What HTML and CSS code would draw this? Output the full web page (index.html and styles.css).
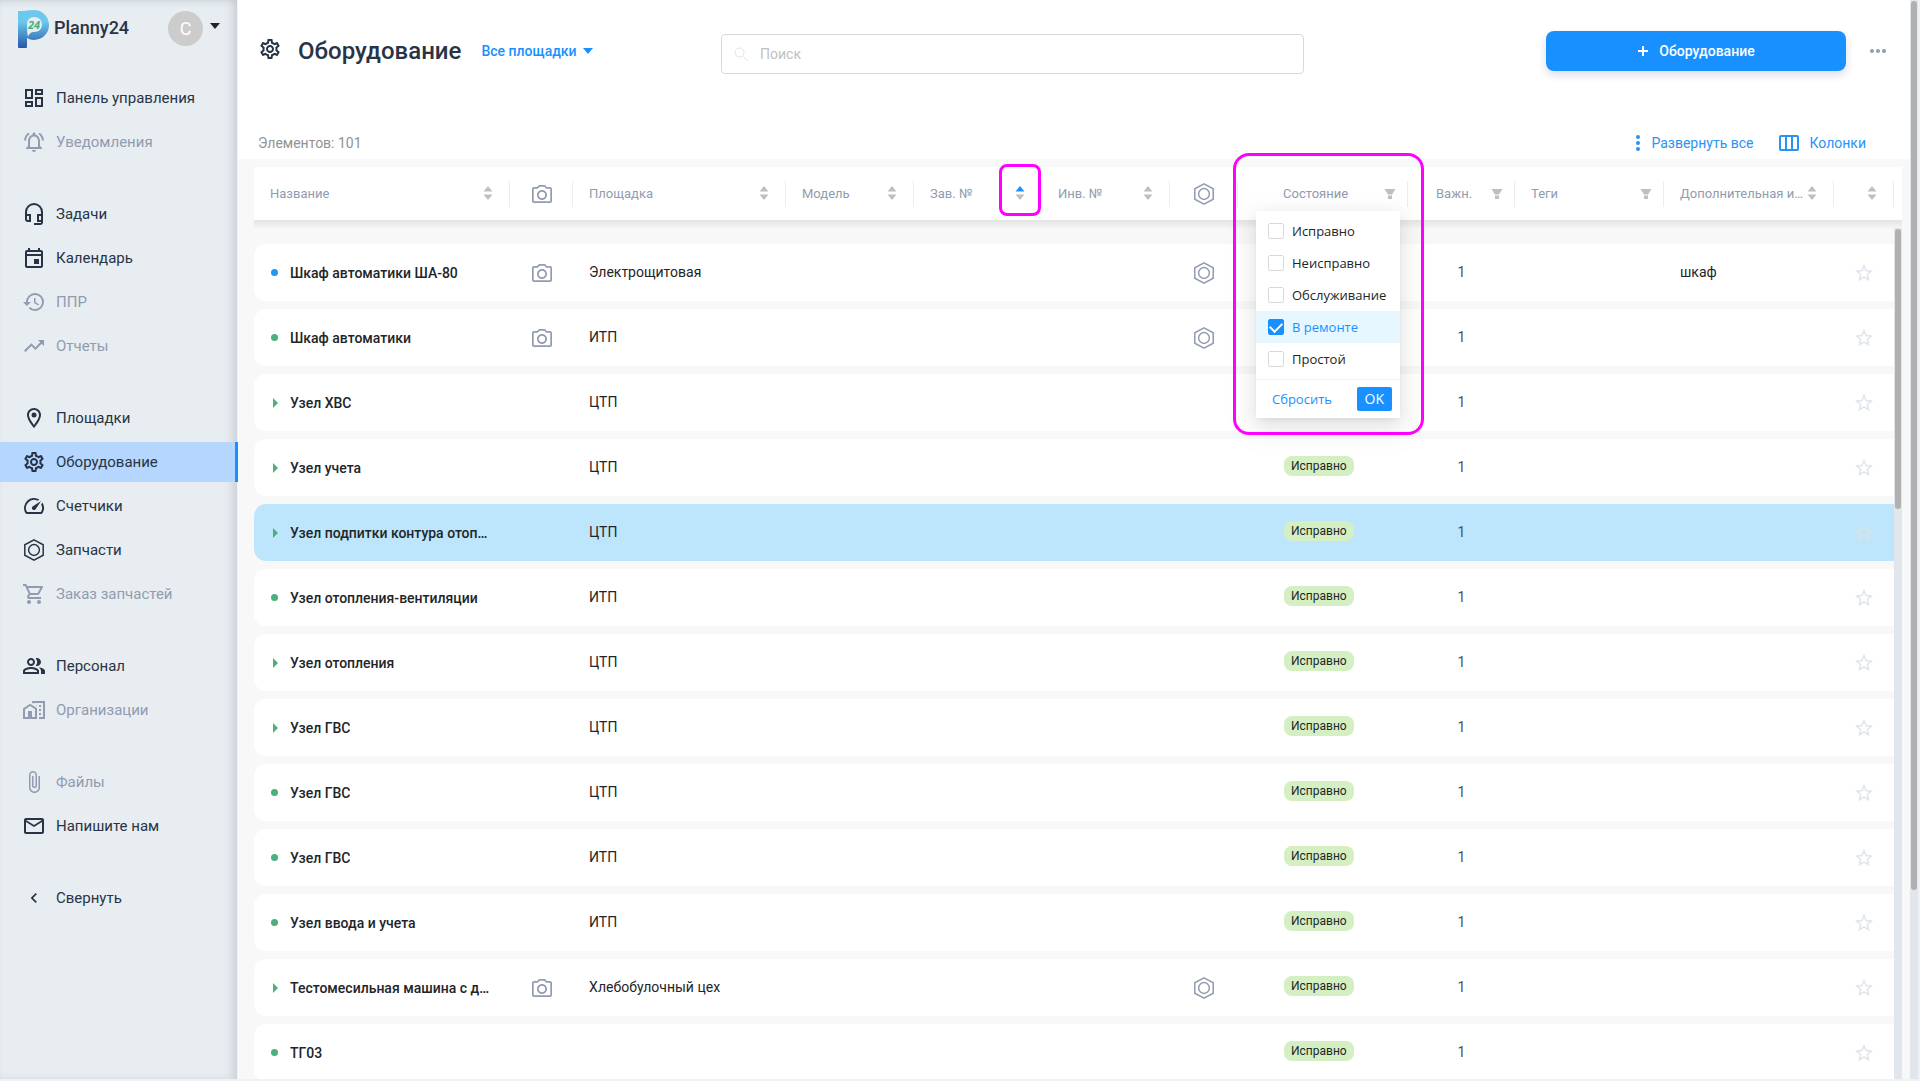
FILE: index.html
```html
<!DOCTYPE html>
<html lang="ru">
<head>
<meta charset="utf-8">
<title>Planny24 — Оборудование</title>
<link rel="stylesheet" href="styles.css">
</head>
<body>
<svg class="sprite" aria-hidden="true">
  <symbol id="i-dashboard" viewBox="0 0 24 24"><path d="M19 5v2h-4V5h4M9 5v6H5V5h4m10 8v6h-4v-6h4M9 17v2H5v-2h4M21 3h-8v6h8V3zM11 3H3v10h8V3zm10 8h-8v10h8V11zm-10 4H3v6h8v-6z"/></symbol>
  <symbol id="i-bell" viewBox="0 0 24 24"><path d="M12 22c1.1 0 2-.9 2-2h-4c0 1.100.9 2 2 2zm6-6v-5c0-3.070-1.630-5.640-4.500-6.320V4c0-.83-.67-1.500-1.500-1.500s-1.500.67-1.500 1.500v.68C7.640 5.360 6 7.920 6 11v5l-2 2v1h16v-1l-2-2zm-2 1H8v-6c0-2.480 1.510-4.500 4-4.500s4 2.020 4 4.500v6zM7.580 4.080L6.150 2.650C3.750 4.480 2.170 7.300 2.030 10.500h2c.15-2.650 1.510-4.970 3.550-6.420zm12.390 6.420h2c-.15-3.200-1.730-6.020-4.120-7.850l-1.420 1.430c2.020 1.450 3.390 3.770 3.540 6.420z"/></symbol>
  <symbol id="i-headset" viewBox="0 0 24 24"><path d="M12 1a9 9 0 0 0-9 9v7a3 3 0 0 0 3 3h3v-8H5v-2a7 7 0 0 1 14 0v2h-4v8h4v1h-7v2h6a3 3 0 0 0 3-3V10a9 9 0 0 0-9-9zM7 14v4H6a1 1 0 0 1-1-1v-3h2zm10 4v-4h2v4h-2z"/></symbol>
  <symbol id="i-event" viewBox="0 0 24 24"><path d="M19 4h-1V2h-2v2H8V2H6v2H5c-1.110 0-1.990.9-1.990 2L3 20c0 1.100.89 2 2 2h14c1.100 0 2-.9 2-2V6c0-1.100-.9-2-2-2zm0 16H5V10h14v10zm0-12H5V6h14v2zm-7 5h5v5h-5z"/></symbol>
  <symbol id="i-history" viewBox="0 0 24 24"><path d="M13 3a9 9 0 0 0-9 9H1l3.890 3.890.07.14L9 12H6c0-3.870 3.130-7 7-7s7 3.130 7 7-3.130 7-7 7c-1.930 0-3.680-.79-4.940-2.060l-1.420 1.420A8.950 8.950 0 0 0 13 21a9 9 0 0 0 0-18zm-1 5v5l4.280 2.540.72-1.210-3.500-2.080V8H12z"/></symbol>
  <symbol id="i-trend" viewBox="0 0 24 24"><path d="M16 6l2.290 2.290-4.880 4.880-4-4L2 16.590 3.410 18l6-6 4 4 6.300-6.290L22 12V6z"/></symbol>
  <symbol id="i-place" viewBox="0 0 24 24"><path d="M12 2C8.130 2 5 5.130 5 9c0 5.250 7 13 7 13s7-7.750 7-13c0-3.870-3.130-7-7-7zM7 9c0-2.760 2.240-5 5-5s5 2.240 5 5c0 2.880-2.880 7.190-5 9.880C9.920 16.210 7 11.850 7 9z"/><circle cx="12" cy="9" r="2.500"/></symbol>
  <symbol id="i-gear" viewBox="0 0 24 24"><path d="M19.430 12.980c.04-.32.07-.64.07-.98 0-.34-.03-.66-.07-.98l2.110-1.650c.19-.15.24-.42.12-.64l-2-3.460c-.09-.16-.26-.25-.44-.25-.06 0-.12.010-.17.030l-2.490 1c-.52-.4-1.080-.73-1.690-.98l-.38-2.650C14.460 2.180 14.250 2 14 2h-4c-.25 0-.46.18-.49.42l-.38 2.650c-.61.25-1.170.59-1.690.98l-2.490-1c-.06-.02-.12-.03-.18-.03-.17 0-.34.09-.43.25l-2 3.460c-.13.22-.07.49.12.64l2.110 1.650c-.04.32-.07.65-.07.98 0 .33.03.66.07.98l-2.110 1.650c-.19.15-.24.42-.12.64l2 3.460c.09.16.26.25.44.25.06 0 .12-.01.17-.03l2.490-1c.52.4 1.080.73 1.690.98l.38 2.650c.03.24.24.42.49.42h4c.25 0 .46-.18.49-.42l.38-2.650c.61-.25 1.170-.59 1.690-.98l2.490 1c.06.02.12.03.18.03.17 0 .34-.09.43-.25l2-3.460c.12-.22.07-.49-.12-.64l-2.110-1.650zm-1.980-1.710c.04.31.05.52.05.73 0 .21-.02.43-.05.73l-.14 1.130.89.7 1.080.84-.7 1.210-1.270-.51-1.040-.42-.9.68c-.43.32-.84.56-1.250.73l-1.060.43-.16 1.130-.2 1.350h-1.400l-.19-1.350-.16-1.130-1.060-.43c-.43-.18-.83-.41-1.230-.71l-.91-.7-1.060.43-1.270.51-.7-1.210 1.080-.84.89-.7-.14-1.130c-.03-.31-.05-.54-.05-.74s.02-.43.05-.73l.14-1.130-.89-.7-1.080-.84.7-1.210 1.270.51 1.040.42.9-.68c.43-.32.84-.56 1.250-.73l1.060-.43.16-1.130.2-1.350h1.390l.19 1.350.16 1.130 1.060.43c.43.18.83.41 1.230.71l.91.7 1.060-.43 1.270-.51.7 1.210-1.070.85-.89.7.14 1.130zM12 8c-2.210 0-4 1.790-4 4s1.790 4 4 4 4-1.790 4-4-1.790-4-4-4zm0 6c-1.100 0-2-.9-2-2s.9-2 2-2 2 .9 2 2-.9 2-2 2z"/></symbol>
  <symbol id="i-speed" viewBox="0 0 24 24"><path d="M20.380 8.570l-1.230 1.850a8 8 0 0 1-.22 7.580H5.070A8 8 0 0 1 15.580 6.850l1.850-1.230A10 10 0 0 0 3.350 19a2 2 0 0 0 1.720 1h13.850a2 2 0 0 0 1.740-1 10 10 0 0 0-.27-10.440zm-9.790 6.840a2 2 0 0 0 2.830 0l5.660-8.490-8.490 5.660a2 2 0 0 0 0 2.830z"/></symbol>
  <symbol id="i-nut" viewBox="0 0 24 24"><g fill="none" stroke="currentColor" stroke-width="1.500"><path d="M12 1.800l9.200 5v10.400l-9.200 5-9.200-5V6.800z"/><circle cx="12" cy="12" r="5.400"/></g></symbol>
  <symbol id="i-cart" viewBox="0 0 24 24"><path d="M15.550 13c.75 0 1.410-.41 1.750-1.030l3.580-6.490A.996.996 0 0 0 20.010 4H5.210l-.94-2H1v2h2l3.600 7.590-1.350 2.440C4.520 15.370 5.480 17 7 17h12v-2H7l1.100-2h7.450zM6.160 6h12.150l-2.760 5H8.530L6.160 6zM7 18c-1.100 0-1.990.9-1.990 2S5.900 22 7 22s2-.9 2-2-.9-2-2-2zm10 0c-1.100 0-1.990.9-1.990 2s.89 2 1.990 2 2-.9 2-2-.9-2-2-2z"/></symbol>
  <symbol id="i-people" viewBox="0 0 24 24"><path d="M16.670 13.130C18.040 14.060 19 15.320 19 17v3h4v-3c0-2.180-3.570-3.470-6.330-3.870zM15 12c2.210 0 4-1.790 4-4s-1.790-4-4-4c-.47 0-.91.1-1.330.24a5.980 5.980 0 0 1 0 7.520c.42.14.86.24 1.330.24zM9 12c2.210 0 4-1.790 4-4s-1.790-4-4-4-4 1.790-4 4 1.790 4 4 4zm0-6c1.100 0 2 .9 2 2s-.9 2-2 2-2-.9-2-2 .9-2 2-2zm0 7c-2.670 0-8 1.340-8 4v3h16v-3c0-2.660-5.330-4-8-4zm6 5H3v-.99C3.200 16.290 6.300 15 9 15s5.800 1.290 6 2v1z"/></symbol>
  <symbol id="i-homework" viewBox="0 0 24 24"><path d="M17 15h2v2h-2zM17 11h2v2h-2zM17 7h2v2h-2zM13.740 7l1.260.84V7z"/><path d="M10 3v1.510l2 1.330V5h9v14h-4v2h6V3z"/><path d="M8.170 5.700L15 10.250V21H1V10.480L8.170 5.700zM10 19h3v-7.840L8.170 8.090 3 11.380V19h3v-6h4v6z"/></symbol>
  <symbol id="i-clip" viewBox="0 0 24 24"><path d="M16.500 6v11.500c0 2.210-1.790 4-4 4s-4-1.790-4-4V5a2.500 2.500 0 0 1 5 0v10.500c0 .55-.45 1-1 1s-1-.45-1-1V6H10v9.500a2.500 2.500 0 0 0 5 0V5c0-2.210-1.790-4-4-4S7 2.790 7 5v12.500c0 3.040 2.460 5.500 5.500 5.500s5.500-2.460 5.500-5.500V6h-1.500z"/></symbol>
  <symbol id="i-mail" viewBox="0 0 24 24"><path d="M22 6c0-1.100-.9-2-2-2H4c-1.100 0-2 .9-2 2v12c0 1.100.9 2 2 2h16c1.100 0 2-.9 2-2V6zm-2 0l-8 5-8-5h16zm0 12H4V8l8 5 8-5v10z"/></symbol>
  <symbol id="i-left" viewBox="0 0 24 24"><path d="M15.410 7.410L14 6l-6 6 6 6 1.410-1.410L10.830 12z"/></symbol>
  <symbol id="i-camera" viewBox="0 0 24 24"><path d="M20 5h-3.170L15 3H9L7.170 5H4c-1.100 0-2 .9-2 2v12c0 1.100.9 2 2 2h16c1.100 0 2-.9 2-2V7c0-1.100-.9-2-2-2zm.300 14.300H3.700V6.700h4.050L9.700 4.700h4.600l1.950 2h4.050v12.600zM12 8c-2.760 0-5 2.240-5 5s2.240 5 5 5 5-2.240 5-5-2.240-5-5-5zm0 8.300c-1.800 0-3.300-1.500-3.300-3.300s1.500-3.300 3.300-3.300 3.300 1.500 3.300 3.300-1.500 3.300-3.300 3.300z"/></symbol>
  <symbol id="i-star" viewBox="0 0 24 24"><path d="M22 9.240l-7.190-.62L12 2 9.190 8.630 2 9.240l5.460 4.730L5.820 21 12 17.270 18.180 21l-1.630-7.030L22 9.240zM12 15.400l-3.760 2.270 1-4.280-3.320-2.880 4.380-.38L12 6.100l1.710 4.040 4.380.38-3.320 2.880 1 4.280L12 15.400z"/></symbol>
  <symbol id="i-search" viewBox="0 0 16 16"><g fill="none" stroke="currentColor" stroke-width="1"><circle cx="6.500" cy="6.500" r="4.500"/><path d="M9.800 10l5 5"/></g></symbol>
  <symbol id="i-sort" viewBox="0 0 10 14"><path d="M5 0l4.500 5.500h-9z"/><path d="M5 14L.5 8.500h9z"/></symbol>
  <symbol id="i-sort-up" viewBox="0 0 10 14"><path fill="#1890ff" d="M5 0l4.500 5.500h-9z"/><path d="M5 14L.5 8.500h9z"/></symbol>
  <symbol id="i-filter" viewBox="0 0 12 12"><path d="M.5 1h11L8 6.500H4zM4 7.500h4V11H4z"/></symbol>
  <symbol id="i-cols" viewBox="0 0 20 16"><g fill="none" stroke="currentColor" stroke-width="2"><rect x="1" y="1" width="18" height="14" rx="1"/><path d="M7 1v14M13 1v14"/></g></symbol>
  <symbol id="i-down" viewBox="0 0 10 6"><path d="M0 0h10L5 6z"/></symbol>
  <symbol id="i-right" viewBox="0 0 6 10"><path d="M0 0l5 5-5 5z"/></symbol>
  <symbol id="i-dots" viewBox="0 0 16 4"><circle cx="2" cy="2" r="2"/><circle cx="8" cy="2" r="2"/><circle cx="14" cy="2" r="2"/></symbol>
  <symbol id="i-vdots" viewBox="0 0 4 16"><circle cx="2" cy="2" r="2"/><circle cx="2" cy="8" r="2"/><circle cx="2" cy="14" r="2"/></symbol>
  <symbol id="i-plus" viewBox="0 0 12 12"><path d="M5 1h2v4h4v2H7v4H5V7H1V5h4z"/></symbol>
</svg>

<div class="app">
  <aside class="sidebar">
    <div class="brand">
      <svg class="logo" viewBox="0 0 31 38" role="img" aria-label="Planny24">
        <defs><linearGradient id="lg" x1="0" y1="0" x2="0" y2="1"><stop offset=".3" stop-color="#6cc9ee"/><stop offset="1" stop-color="#2a56a5"/></linearGradient></defs>
        <path fill="url(#lg)" d="M0 1h6q5-1 10-1a15 15 0 0 1 0 30q-4 0-7-2V37q0 1-1 1H1q-1 0-1-1z"/>
        <path fill="#e7edf1" d="M16 7c5 0 8 3 8 7.500S21 22 16 22c-3 0-4 1-6 4.500C9 24 9 19 9 14.500 9 10 12 7 16 7z"/>
        <text class="logo-text" x="10" y="19">24</text>
      </svg>
      <span class="brand-name">Planny24</span>
      <button class="user" type="button" aria-label="Профиль"><span class="avatar">C</span><svg class="caret"><use href="#i-down"/></svg></button>
    </div>
    <nav class="menu">
      <ul>
        <li><a href="#"><svg><use href="#i-dashboard"/></svg>Панель управления</a></li>
        <li><a class="muted" href="#"><svg><use href="#i-bell"/></svg>Уведомления</a></li>
      </ul>
      <ul>
        <li><a href="#"><svg><use href="#i-headset"/></svg>Задачи</a></li>
        <li><a href="#"><svg><use href="#i-event"/></svg>Календарь</a></li>
        <li><a class="muted" href="#"><svg><use href="#i-history"/></svg>ППР</a></li>
        <li><a class="muted" href="#"><svg><use href="#i-trend"/></svg>Отчеты</a></li>
      </ul>
      <ul>
        <li><a href="#"><svg><use href="#i-place"/></svg>Площадки</a></li>
        <li><a class="active" href="#"><svg><use href="#i-gear"/></svg>Оборудование</a></li>
        <li><a href="#"><svg><use href="#i-speed"/></svg>Счетчики</a></li>
        <li><a href="#"><svg><use href="#i-nut"/></svg>Запчасти</a></li>
        <li><a class="muted" href="#"><svg><use href="#i-cart"/></svg>Заказ запчастей</a></li>
      </ul>
      <ul>
        <li><a href="#"><svg><use href="#i-people"/></svg>Персонал</a></li>
        <li><a class="muted" href="#"><svg><use href="#i-homework"/></svg>Организации</a></li>
      </ul>
      <ul>
        <li><a class="muted" href="#"><svg><use href="#i-clip"/></svg>Файлы</a></li>
        <li><a href="#"><svg><use href="#i-mail"/></svg>Напишите нам</a></li>
      </ul>
      <ul>
        <li><a href="#"><svg class="small"><use href="#i-left"/></svg>Свернуть</a></li>
      </ul>
    </nav>
  </aside>

  <main class="main">
    <header class="top">
      <div class="heading">
        <svg class="heading-icon"><use href="#i-gear"/></svg>
        <h1>Оборудование</h1>
        <button class="sites" type="button">Все площадки<svg class="caret"><use href="#i-down"/></svg></button>
      </div>
      <label class="search"><svg><use href="#i-search"/></svg><input type="text" placeholder="Поиск" aria-label="Поиск"></label>
      <button class="add" type="button"><svg><use href="#i-plus"/></svg>Оборудование</button>
      <button class="more" type="button" aria-label="Ещё"><svg><use href="#i-dots"/></svg></button>
    </header>
    <div class="tools">
      <span class="count">Элементов: 101</span>
      <button class="tool" type="button"><svg class="vdots"><use href="#i-vdots"/></svg>Развернуть все</button>
      <button class="tool" type="button"><svg class="cols"><use href="#i-cols"/></svg>Колонки</button>
    </div>

    <section class="list">
      <div class="list-head">
        <table>
          <colgroup><col class="c-name"><col class="c-photo"><col class="c-site"><col class="c-mid"><col class="c-mid"><col class="c-mid"><col class="c-part"><col class="c-state"><col class="c-rank"><col class="c-tags"><col class="c-extra"><col class="c-star"></colgroup>
          <thead><tr>
            <th><div class="th"><span>Название</span><svg class="sort"><use href="#i-sort"/></svg></div></th>
            <th><div class="th icon"><svg><use href="#i-camera"/></svg></div></th>
            <th><div class="th"><span>Площадка</span><svg class="sort"><use href="#i-sort"/></svg></div></th>
            <th><div class="th"><span>Модель</span><svg class="sort"><use href="#i-sort"/></svg></div></th>
            <th><div class="th"><span>Зав. №</span><svg class="sort"><use href="#i-sort-up"/></svg></div><div class="mark mark-sort"></div></th>
            <th><div class="th"><span>Инв. №</span><svg class="sort"><use href="#i-sort"/></svg></div></th>
            <th><div class="th icon"><svg><use href="#i-nut"/></svg></div></th>
            <th><div class="th state"><span>Состояние</span><svg class="filter"><use href="#i-filter"/></svg></div>
              <form class="popup">
                <ul>
                  <li><label><input type="checkbox">Исправно</label></li>
                  <li><label><input type="checkbox">Неисправно</label></li>
                  <li><label><input type="checkbox">Обслуживание</label></li>
                  <li><label class="on"><input type="checkbox" checked>В ремонте</label></li>
                  <li><label><input type="checkbox">Простой</label></li>
                </ul>
                <div class="popup-foot"><button class="reset" type="reset">Сбросить</button><button class="ok" type="button">OK</button></div>
              </form>
              <div class="mark mark-filter"></div>
            </th>
            <th><div class="th rank"><span>Важн.</span><svg class="filter"><use href="#i-filter"/></svg></div></th>
            <th><div class="th"><span>Теги</span><svg class="filter"><use href="#i-filter"/></svg></div></th>
            <th><div class="th"><span>Дополнительная и…</span><svg class="sort"><use href="#i-sort"/></svg></div></th>
            <th><div class="th"><span></span><svg class="sort"><use href="#i-sort"/></svg></div></th>
          </tr></thead>
        </table>
      </div>
      <div class="head-shade"></div>
      <div class="list-body">
        <table>
          <colgroup><col class="c-name"><col class="c-photo"><col class="c-site"><col class="c-mid"><col class="c-mid"><col class="c-mid"><col class="c-part"><col class="c-state"><col class="c-rank"><col class="c-tags"><col class="c-extra"><col class="c-star"></colgroup>
          <tbody>
            <tr><td class="name"><div><i class="dot blue"></i><b>Шкаф автоматики ША-80</b></div></td><td class="ic"><svg><use href="#i-camera"/></svg></td><td>Электрощитовая</td><td></td><td></td><td></td><td class="ic"><svg><use href="#i-nut"/></svg></td><td></td><td class="num">1</td><td></td><td>шкаф</td><td class="star"><svg><use href="#i-star"/></svg></td></tr>
            <tr><td class="name"><div><i class="dot"></i><b>Шкаф автоматики</b></div></td><td class="ic"><svg><use href="#i-camera"/></svg></td><td>ИТП</td><td></td><td></td><td></td><td class="ic"><svg><use href="#i-nut"/></svg></td><td></td><td class="num">1</td><td></td><td></td><td class="star"><svg><use href="#i-star"/></svg></td></tr>
            <tr><td class="name"><div><svg class="arrow"><use href="#i-right"/></svg><b>Узел ХВС</b></div></td><td></td><td>ЦТП</td><td></td><td></td><td></td><td></td><td></td><td class="num">1</td><td></td><td></td><td class="star"><svg><use href="#i-star"/></svg></td></tr>
            <tr><td class="name"><div><svg class="arrow"><use href="#i-right"/></svg><b>Узел учета</b></div></td><td></td><td>ЦТП</td><td></td><td></td><td></td><td></td><td class="st"><span class="badge">Исправно</span></td><td class="num">1</td><td></td><td></td><td class="star"><svg><use href="#i-star"/></svg></td></tr>
            <tr class="selected"><td class="name"><div><svg class="arrow"><use href="#i-right"/></svg><b>Узел подпитки контура отоп…</b></div></td><td></td><td>ЦТП</td><td></td><td></td><td></td><td></td><td class="st"><span class="badge">Исправно</span></td><td class="num">1</td><td></td><td></td><td class="star"><svg><use href="#i-star"/></svg></td></tr>
            <tr><td class="name"><div><i class="dot"></i><b>Узел отопления-вентиляции</b></div></td><td></td><td>ИТП</td><td></td><td></td><td></td><td></td><td class="st"><span class="badge">Исправно</span></td><td class="num">1</td><td></td><td></td><td class="star"><svg><use href="#i-star"/></svg></td></tr>
            <tr><td class="name"><div><svg class="arrow"><use href="#i-right"/></svg><b>Узел отопления</b></div></td><td></td><td>ЦТП</td><td></td><td></td><td></td><td></td><td class="st"><span class="badge">Исправно</span></td><td class="num">1</td><td></td><td></td><td class="star"><svg><use href="#i-star"/></svg></td></tr>
            <tr><td class="name"><div><svg class="arrow"><use href="#i-right"/></svg><b>Узел ГВС</b></div></td><td></td><td>ЦТП</td><td></td><td></td><td></td><td></td><td class="st"><span class="badge">Исправно</span></td><td class="num">1</td><td></td><td></td><td class="star"><svg><use href="#i-star"/></svg></td></tr>
            <tr><td class="name"><div><i class="dot"></i><b>Узел ГВС</b></div></td><td></td><td>ЦТП</td><td></td><td></td><td></td><td></td><td class="st"><span class="badge">Исправно</span></td><td class="num">1</td><td></td><td></td><td class="star"><svg><use href="#i-star"/></svg></td></tr>
            <tr><td class="name"><div><i class="dot"></i><b>Узел ГВС</b></div></td><td></td><td>ИТП</td><td></td><td></td><td></td><td></td><td class="st"><span class="badge">Исправно</span></td><td class="num">1</td><td></td><td></td><td class="star"><svg><use href="#i-star"/></svg></td></tr>
            <tr><td class="name"><div><i class="dot"></i><b>Узел ввода и учета</b></div></td><td></td><td>ИТП</td><td></td><td></td><td></td><td></td><td class="st"><span class="badge">Исправно</span></td><td class="num">1</td><td></td><td></td><td class="star"><svg><use href="#i-star"/></svg></td></tr>
            <tr><td class="name"><div><svg class="arrow"><use href="#i-right"/></svg><b>Тестомесильная машина с д…</b></div></td><td class="ic"><svg><use href="#i-camera"/></svg></td><td>Хлебобулочный цех</td><td></td><td></td><td></td><td class="ic"><svg><use href="#i-nut"/></svg></td><td class="st"><span class="badge">Исправно</span></td><td class="num">1</td><td></td><td></td><td class="star"><svg><use href="#i-star"/></svg></td></tr>
            <tr><td class="name"><div><i class="dot"></i><b>ТГ03</b></div></td><td></td><td></td><td></td><td></td><td></td><td></td><td class="st"><span class="badge">Исправно</span></td><td class="num">1</td><td></td><td></td><td class="star"><svg><use href="#i-star"/></svg></td></tr>
          </tbody>
        </table>
        <div class="scroll"><div class="thumb thumb-list"></div></div>
      </div>
    </section>
  </main>
  <div class="scroll"><div class="thumb thumb-page"></div></div>
</div>
</body>
</html>
```

FILE: styles.css
```css
* { box-sizing: border-box; }

body {
  margin: 0;
  background: #eef1f5;
  color: #222528;
  font: 14px/20px Roboto, "Liberation Sans", sans-serif;
}

ul { list-style: none; margin: 0; padding: 0; }
a { color: inherit; text-decoration: none; }
svg { display: block; flex: none; fill: currentColor; }
button { font: inherit; color: inherit; background: none; border: 0; padding: 0; display: flex; align-items: center; cursor: pointer; }
.sprite { position: absolute; width: 0; height: 0; }
.caret { width: 10px; height: 6px; }

.app { display: flex; height: 100vh; padding: 0 2px 2px 0; overflow: hidden; }

/* Sidebar */
.sidebar {
  flex: none;
  width: 238px;
  background: #e7edf1;
  border-right: 1px solid #f2f3f5;
  box-shadow: inset -6px 0 10px -2px rgba(60, 70, 80, .16), inset 0 4px 8px -4px rgba(60, 70, 80, .12);
}
.brand { display: flex; align-items: center; padding: 10px 17px 0 18px; color: #283445; }
.logo { width: 31px; height: 38px; }
.logo-text { font: italic bold 11px "Open Sans", sans-serif; fill: #45b07c; }
.brand-name { margin: 0 0 2px 5px; font-size: 18px; font-weight: 500; }
.user { margin: 0 0 2px auto; gap: 7px; color: #222528; }
.user .caret { margin-bottom: 4px; }
.avatar { width: 35px; height: 35px; border-radius: 50%; background: #ccc; color: #fff; font-size: 18px; line-height: 35px; text-align: center; }

.menu { display: flex; flex-direction: column; gap: 32px; padding-top: 30px; margin-right: -1px; }
.menu ul { display: flex; flex-direction: column; gap: 4px; }
.menu a { display: flex; align-items: center; gap: 10px; height: 40px; padding-left: 22px; font-size: 15px; color: #283445; }
.menu svg { width: 24px; height: 24px; }
.menu svg.small { padding: 2px; }
.menu .muted { color: #929bb0; }
.menu .active { background: #b5d6ff; border-right: 3px solid #1890ff; }

/* Header */
.main { flex: 1; min-width: 0; display: flex; flex-direction: column; background: #fff; }
.top {
  display: grid;
  grid-template-columns: 461fr 583fr 242fr 300px 40px;
  align-items: center;
  padding: 28px 24px 0 22px;
}
.heading { display: flex; align-items: center; color: #283445; }
.heading-icon { width: 24px; height: 24px; margin: 0 16px 4px -2px; }
h1 { margin: 0; font-size: 24px; line-height: 32px; font-weight: 500; }
.sites { margin-left: 20px; gap: 6px; color: #1890ff; font-weight: 500; }
.search { display: flex; align-items: center; gap: 11px; height: 40px; margin-top: 6px; padding: 0 11px; border: 1px solid #d9d9d9; border-radius: 4px; }
.search svg { width: 16px; height: 16px; color: #dfe3ea; }
.search input { flex: 1; min-width: 0; border: 0; padding: 0; outline: 0; font: inherit; background: none; }
.search input::placeholder { color: #bfbfbf; }
.add { grid-column: 4; height: 40px; justify-content: center; gap: 10px; border-radius: 8px; background: #1890ff; color: #fff; font-weight: 500; box-shadow: 0 4px 8px rgba(40, 40, 110, .16); }
.add svg { width: 12px; height: 12px; }
.more { justify-self: end; color: #929bb0; }
.more svg { width: 16px; height: 4px; }

.tools { display: flex; align-items: center; gap: 25px; padding: 59px 44px 6px 20px; }
.count { margin-right: auto; color: #929292; }
.tool { color: #2893f2; gap: 11px; }
.vdots { width: 4px; height: 16px; }
.cols { width: 20px; height: 16px; }

/* Equipment list */
.list { flex: 1; min-height: 0; display: flex; flex-direction: column; padding: 8px 8px 0 16px; background: #f8f8f8; }
table { width: 100%; table-layout: fixed; border-collapse: separate; border-spacing: 0; }
.c-name { width: 256px; }
.c-photo { width: 63px; }
.c-site { width: 213px; }
.c-mid { width: 128px; }
.c-part { width: 68px; }
.c-state, .c-extra { width: 170px; }
.c-rank { width: 107px; }
.c-tags { width: 149px; }
.c-star { width: 60px; }

.list-head { position: relative; z-index: 2; padding-right: 8px; background: #fff; }
th { position: relative; height: 53px; padding: 0; font-weight: 400; text-align: left; }
.th { display: flex; align-items: center; gap: 2px; height: 26px; padding: 0 16px; border-right: 1px solid #ededed; font-size: 13px; color: #929bb0; }
.th span { flex: 1; min-width: 0; overflow: hidden; text-overflow: ellipsis; white-space: nowrap; }
.th.icon { justify-content: center; padding: 0 0 0 1px; }
.th.icon svg, .ic svg { width: 24px; height: 24px; color: #929bb0; }
.th.state { padding-left: 45px; }
.th.rank { padding-left: 28px; }
.sort { width: 10px; height: 14px; margin-bottom: 2px; color: #bfbfbf; }
.filter { width: 12px; height: 12px; margin-right: -5px; color: #bfbfbf; }
.head-shade { flex: none; height: 8px; background: linear-gradient(#e4e4e4, #f4f4f4); }

.list-body { flex: 1; min-height: 0; display: flex; align-items: stretch; overflow: hidden; }
.list-body table { align-self: flex-start; flex: 1; min-width: 0; margin-top: 8px; border-spacing: 0 8px; }
td { height: 57px; padding: 0 0 2px 16px; background: #fff; white-space: nowrap; }
td:first-child { border-radius: 12px 0 0 12px; }
.selected td { background: #bde6fd; }
.name div { display: flex; align-items: center; }
.name b { overflow: hidden; text-overflow: ellipsis; font-weight: 500; }
.name { padding: 0 16px 0 17px; }
.dot { flex: none; width: 7px; height: 7px; margin-right: 12px; border-radius: 50%; background: #4caf7d; }
.dot.blue { background: #2196f3; }
.arrow { width: 6px; height: 10px; margin: 0 11px 0 2px; color: #4caf7d; }
.ic { padding: 0; }
.ic svg { margin: 0 auto; }
.st { padding: 0 0 4px 46px; }
.badge { display: inline-block; padding: 0 7px; border-radius: 8px; background: #d4efc1; font-size: 12px; line-height: 20px; }
.num { padding: 0 0 2px; text-align: center; color: #4a4f5c; }
.star { padding: 0; color: #dfe4ea; }
.selected .star { color: #dfe0e0; }
.star svg { width: 22px; height: 22px; margin: 0 auto; }

/* Status filter */
.popup { position: absolute; z-index: 3; top: 44px; left: 18px; width: 144px; background: #fff; color: #222528; font: 13px/22px "Open Sans", "Noto Sans", sans-serif; box-shadow: 0 3px 6px -4px rgba(0, 0, 0, .12), 0 6px 16px rgba(0, 0, 0, .08), 0 9px 28px 8px rgba(0, 0, 0, .05); }
.popup ul { padding: 4px 0; }
.popup label { display: flex; align-items: center; gap: 8px; height: 32px; padding-left: 12px; }
.popup .on { background: #e6f7ff; color: #1890ff; }
.popup input { appearance: none; flex: none; display: grid; place-items: center; width: 16px; height: 16px; margin: 0; border: 1px solid #d9d9d9; border-radius: 2px; background: #fff; }
.popup input:checked { background: #1890ff; border-color: #1890ff; }
.popup input:checked::before { content: ""; width: 6px; height: 10px; margin-bottom: 3px; border: solid #fff; border-width: 0 2px 2px 0; rotate: 45deg; }
.popup-foot { display: flex; align-items: center; justify-content: space-between; padding: 7px 8px; border-top: 1px solid #f0f0f0; }
.reset { padding-left: 8px; color: #1890ff; }
.ok { height: 24px; padding: 0 8px; border-radius: 2px; background: #1890ff; color: #fff; font-size: 14px; }

.mark { position: absolute; z-index: 4; border: 3px solid #f0f; pointer-events: none; }
.mark-sort { top: -3px; right: 1px; width: 42px; height: 52px; border-radius: 8px; }
.mark-filter { top: -14px; left: -5px; width: 191px; height: 282px; border-radius: 16px; }

/* Scroll bars */
.scroll { flex: none; width: 8px; padding: 1px; background: #e1e6ed; }
.thumb { border-radius: 3px; background: #b0b0b0; }
.thumb-list { height: 33%; }
.thumb-page { height: 82.5%; }
```
